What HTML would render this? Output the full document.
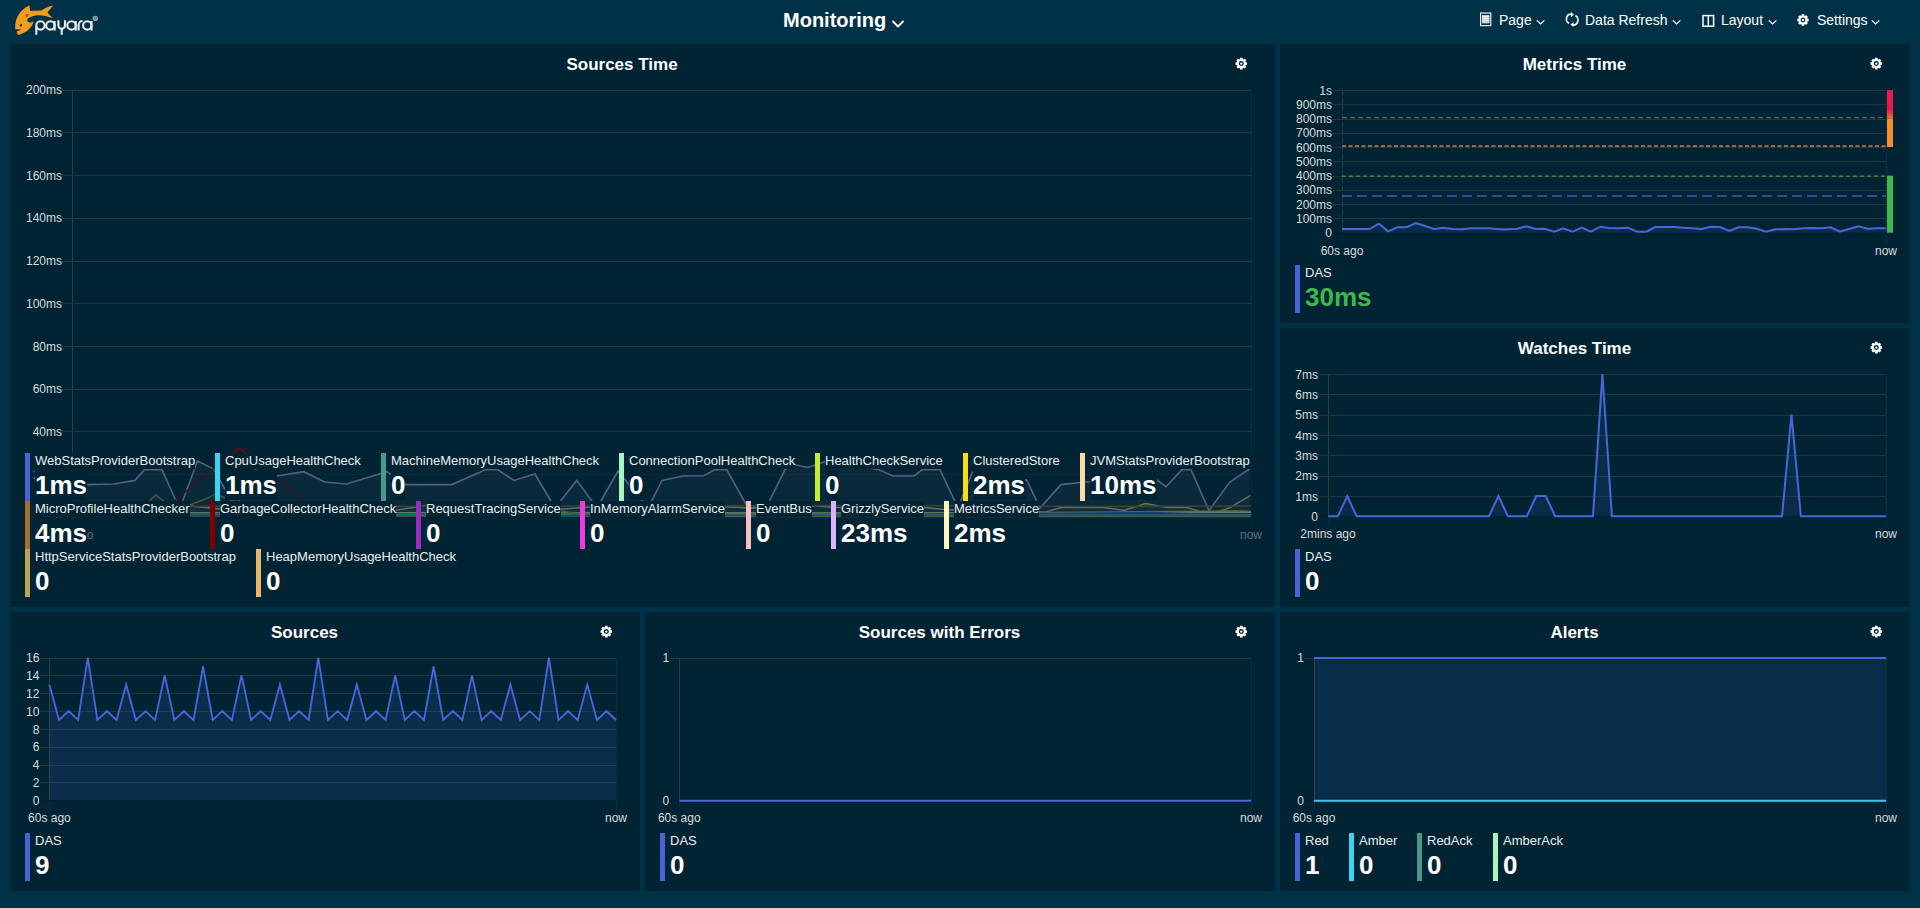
<!DOCTYPE html><html><head><meta charset="utf-8"><style>
html,body{margin:0;padding:0;width:1920px;height:908px;overflow:hidden;background:#003247;font-family:"Liberation Sans",sans-serif;}
.abs{position:absolute;display:block}
.panel{position:absolute;background:#002434}
.title{position:absolute;width:300px;text-align:center;color:#fff;font-weight:bold;font-size:17px;line-height:19px}
.lg{position:absolute;border-left:5px solid;padding-left:5px;height:48px;box-sizing:border-box;color:#fff;white-space:nowrap}
.ll{font-size:13px;line-height:15px;height:16px;color:#eee}
.ll span{display:inline-block;height:16px;background:#002434;vertical-align:top}
.lv{font-size:26px;font-weight:bold;line-height:30px;margin-top:1px}
.lv span{display:inline-block;height:30px;background:#002434;vertical-align:top}
.ax{position:absolute;font-size:12px;line-height:14px;color:#dcdcdc;white-space:nowrap}
.axr{text-align:right;width:60px}
.axc{text-align:center;width:80px}
.nav{position:absolute;top:12px;font-size:14px;line-height:16px;color:#fff;white-space:nowrap}
</style></head><body>

<div class="abs" style="left:0;top:0;width:1920px;height:44px;background:#003247"></div>
<svg class="abs" style="left:0;top:0" width="110" height="40">
<path fill="#f29b1f" d="M29.4,5.4 L30.2,11.1 C34,10.6 38,10.7 41.3,10.5 C45,8 49,6 53.2,5.4 L47.3,12.5 L52.8,18.3 C46,15.5 40,14.8 35.8,15.5 C31,16.5 28.5,17.8 27.6,18.8 C26.6,20.2 27.5,22.4 29.8,22.6 C31.5,22.7 32.8,21.8 33.6,21 C33,25 29.5,30 24.5,32.6 C21.5,34.2 19.2,34.9 18,34.9 L16.6,31.4 L21.6,29.6 L15.2,29.2 C14.9,24 15.9,19.5 17.6,16.6 C19.3,13 21.8,10.4 23.9,8.8 C25.6,7.3 27.6,6 29.4,5.4 Z"/>
<ellipse cx="21" cy="25.2" rx="0.9" ry="1.5" fill="#003247" transform="rotate(20 21 25.2)"/>
<path fill="#6b6a3a" d="M25.2,14.7 L29,13.9 L26.8,17.9 Z"/>
<g fill="none" stroke="#e9ecee" stroke-width="2.1" stroke-linecap="butt">
<path d="M36.3,34.8 V25.4 A4.2,4.2 0 1 1 40.5,29.6 A4.2,4.2 0 0 1 36.3,25.4"/>
<circle cx="50.4" cy="25.4" r="4.2"/><path d="M54.6,21 V30.6"/>
<path d="M58.4,20.3 V25.4 A3.3,3.3 0 0 0 65,25.4 V20.3 M61.7,28.7 V34.8"/>
<circle cx="71.5" cy="25.4" r="4.2"/><path d="M75.7,21 V30.6"/>
<path d="M78.6,30.6 V25 A4,4 0 0 1 82.6,21"/>
<circle cx="87.3" cy="25.4" r="4.2"/><path d="M91.5,21 V30.6"/>
</g>
<circle cx="95.3" cy="18.4" r="2.7" fill="#8ea0aa"/><path d="M94.4,20 V16.9 H95.6 A0.8,0.8 0 0 1 95.6,18.5 H94.4 M95.5,18.5 L96.3,20" fill="none" stroke="#5d7380" stroke-width="0.6"/>
</svg>
<div class="abs" style="left:783px;top:9px;font-size:20px;line-height:22px;font-weight:bold;color:#fff">Monitoring</div>
<svg class="abs" style="left:890px;top:18px" width="16" height="12"><path d="M2.5,3 L8,8.5 L13.5,3" fill="none" stroke="#fff" stroke-width="1.8"/></svg>
<svg class="abs" style="left:1480px;top:12px" width="12" height="15"><rect x="0.6" y="1" width="10.2" height="12.6" fill="#0b2f40" stroke="#e6ecef" stroke-width="1.2"/><rect x="2" y="3" width="7.4" height="8.4" fill="#c8d0d4"/><g stroke="#eef2f4" stroke-width="1"><path d="M2,4.5H9.4M2,6.6H9.4M2,8.7H9.4"/></g></svg>
<div class="nav" style="left:1499px">Page</div><svg class="abs" style="left:1535px;top:19.3px" width="10" height="8"><path d="M1.8,1.3 L5.6,5 L9.4,1.3" fill="none" stroke="#fff" stroke-width="1.1"/></svg>
<svg class="abs" style="left:1565px;top:11px" width="15" height="17"><g transform="translate(7.2,8.5) scale(0.82,0.95) translate(-7.5,-8.5)"><path d="M7,3.2 A5,5 0 0 0 3.6,12.6 M8,13.8 A5,5 0 0 0 11.4,4.4" fill="none" stroke="#fff" stroke-width="2"/><path d="M6,0.6 L9.6,3.3 L6,6 Z M9,11 L5.4,13.7 L9,16.4 Z" fill="#fff"/></g></svg>
<div class="nav" style="left:1585px">Data Refresh</div><svg class="abs" style="left:1671px;top:19.3px" width="10" height="8"><path d="M1.8,1.3 L5.6,5 L9.4,1.3" fill="none" stroke="#fff" stroke-width="1.1"/></svg>
<svg class="abs" style="left:1702px;top:14px" width="13" height="14"><rect x="1" y="1.6" width="10.6" height="10.6" fill="none" stroke="#fff" stroke-width="1.5"/><path d="M6.3,1.6V12.2" stroke="#fff" stroke-width="1.5"/></svg>
<div class="nav" style="left:1721px">Layout</div><svg class="abs" style="left:1767px;top:19.3px" width="10" height="8"><path d="M1.8,1.3 L5.6,5 L9.4,1.3" fill="none" stroke="#fff" stroke-width="1.1"/></svg>
<svg class="abs" style="left:1796px;top:13px" width="14" height="14"><polygon points="5.45,2.87 5.85,1.32 8.15,1.32 8.55,2.87 8.82,2.98 10.20,2.17 11.83,3.80 11.02,5.18 11.13,5.45 12.68,5.85 12.68,8.15 11.13,8.55 11.02,8.82 11.83,10.20 10.20,11.83 8.82,11.02 8.55,11.13 8.15,12.68 5.85,12.68 5.45,11.13 5.18,11.02 3.80,11.83 2.17,10.20 2.98,8.82 2.87,8.55 1.32,8.15 1.32,5.85 2.87,5.45 2.98,5.18 2.17,3.80 3.80,2.17 5.18,2.98" fill="#fff"/><circle cx="7" cy="7" r="2.44" fill="#003247"/><circle cx="7" cy="7" r="1.16" fill="#fff"/></svg>
<div class="nav" style="left:1817px">Settings</div><svg class="abs" style="left:1870px;top:19.3px" width="10" height="8"><path d="M1.8,1.3 L5.6,5 L9.4,1.3" fill="none" stroke="#fff" stroke-width="1.1"/></svg>
<div class="panel" style="left:10px;top:44px;width:1265px;height:563px"></div>
<div class="title" style="left:472.0px;top:55px">Sources Time</div>
<svg class="abs" style="left:1233px;top:56px" width="16" height="16"><polygon points="6.72,3.40 7.13,1.82 9.47,1.82 9.88,3.40 10.15,3.52 11.56,2.68 13.22,4.34 12.38,5.75 12.50,6.02 14.08,6.43 14.08,8.77 12.50,9.18 12.38,9.45 13.22,10.86 11.56,12.52 10.15,11.68 9.88,11.80 9.47,13.38 7.13,13.38 6.72,11.80 6.45,11.68 5.04,12.52 3.38,10.86 4.22,9.45 4.10,9.18 2.52,8.77 2.52,6.43 4.10,6.02 4.22,5.75 3.38,4.34 5.04,2.68 6.45,3.52" fill="#fff"/><circle cx="8.3" cy="7.6" r="2.48" fill="#002434"/><circle cx="8.3" cy="7.6" r="1.18" fill="#fff"/></svg>
<div class="panel" style="left:1280px;top:44px;width:630px;height:279px"></div>
<div class="title" style="left:1424.5px;top:55px">Metrics Time</div>
<svg class="abs" style="left:1868px;top:56px" width="16" height="16"><polygon points="6.72,3.40 7.13,1.82 9.47,1.82 9.88,3.40 10.15,3.52 11.56,2.68 13.22,4.34 12.38,5.75 12.50,6.02 14.08,6.43 14.08,8.77 12.50,9.18 12.38,9.45 13.22,10.86 11.56,12.52 10.15,11.68 9.88,11.80 9.47,13.38 7.13,13.38 6.72,11.80 6.45,11.68 5.04,12.52 3.38,10.86 4.22,9.45 4.10,9.18 2.52,8.77 2.52,6.43 4.10,6.02 4.22,5.75 3.38,4.34 5.04,2.68 6.45,3.52" fill="#fff"/><circle cx="8.3" cy="7.6" r="2.48" fill="#002434"/><circle cx="8.3" cy="7.6" r="1.18" fill="#fff"/></svg>
<div class="panel" style="left:1280px;top:328px;width:630px;height:279px"></div>
<div class="title" style="left:1424.5px;top:339px">Watches Time</div>
<svg class="abs" style="left:1868px;top:340px" width="16" height="16"><polygon points="6.72,3.40 7.13,1.82 9.47,1.82 9.88,3.40 10.15,3.52 11.56,2.68 13.22,4.34 12.38,5.75 12.50,6.02 14.08,6.43 14.08,8.77 12.50,9.18 12.38,9.45 13.22,10.86 11.56,12.52 10.15,11.68 9.88,11.80 9.47,13.38 7.13,13.38 6.72,11.80 6.45,11.68 5.04,12.52 3.38,10.86 4.22,9.45 4.10,9.18 2.52,8.77 2.52,6.43 4.10,6.02 4.22,5.75 3.38,4.34 5.04,2.68 6.45,3.52" fill="#fff"/><circle cx="8.3" cy="7.6" r="2.48" fill="#002434"/><circle cx="8.3" cy="7.6" r="1.18" fill="#fff"/></svg>
<div class="panel" style="left:10px;top:612px;width:630px;height:279px"></div>
<div class="title" style="left:154.5px;top:623px">Sources</div>
<svg class="abs" style="left:598px;top:624px" width="16" height="16"><polygon points="6.72,3.40 7.13,1.82 9.47,1.82 9.88,3.40 10.15,3.52 11.56,2.68 13.22,4.34 12.38,5.75 12.50,6.02 14.08,6.43 14.08,8.77 12.50,9.18 12.38,9.45 13.22,10.86 11.56,12.52 10.15,11.68 9.88,11.80 9.47,13.38 7.13,13.38 6.72,11.80 6.45,11.68 5.04,12.52 3.38,10.86 4.22,9.45 4.10,9.18 2.52,8.77 2.52,6.43 4.10,6.02 4.22,5.75 3.38,4.34 5.04,2.68 6.45,3.52" fill="#fff"/><circle cx="8.3" cy="7.6" r="2.48" fill="#002434"/><circle cx="8.3" cy="7.6" r="1.18" fill="#fff"/></svg>
<div class="panel" style="left:645px;top:612px;width:630px;height:279px"></div>
<div class="title" style="left:789.5px;top:623px">Sources with Errors</div>
<svg class="abs" style="left:1233px;top:624px" width="16" height="16"><polygon points="6.72,3.40 7.13,1.82 9.47,1.82 9.88,3.40 10.15,3.52 11.56,2.68 13.22,4.34 12.38,5.75 12.50,6.02 14.08,6.43 14.08,8.77 12.50,9.18 12.38,9.45 13.22,10.86 11.56,12.52 10.15,11.68 9.88,11.80 9.47,13.38 7.13,13.38 6.72,11.80 6.45,11.68 5.04,12.52 3.38,10.86 4.22,9.45 4.10,9.18 2.52,8.77 2.52,6.43 4.10,6.02 4.22,5.75 3.38,4.34 5.04,2.68 6.45,3.52" fill="#fff"/><circle cx="8.3" cy="7.6" r="2.48" fill="#002434"/><circle cx="8.3" cy="7.6" r="1.18" fill="#fff"/></svg>
<div class="panel" style="left:1280px;top:612px;width:630px;height:279px"></div>
<div class="title" style="left:1424.5px;top:623px">Alerts</div>
<svg class="abs" style="left:1868px;top:624px" width="16" height="16"><polygon points="6.72,3.40 7.13,1.82 9.47,1.82 9.88,3.40 10.15,3.52 11.56,2.68 13.22,4.34 12.38,5.75 12.50,6.02 14.08,6.43 14.08,8.77 12.50,9.18 12.38,9.45 13.22,10.86 11.56,12.52 10.15,11.68 9.88,11.80 9.47,13.38 7.13,13.38 6.72,11.80 6.45,11.68 5.04,12.52 3.38,10.86 4.22,9.45 4.10,9.18 2.52,8.77 2.52,6.43 4.10,6.02 4.22,5.75 3.38,4.34 5.04,2.68 6.45,3.52" fill="#fff"/><circle cx="8.3" cy="7.6" r="2.48" fill="#002434"/><circle cx="8.3" cy="7.6" r="1.18" fill="#fff"/></svg>
<div class="ax axr" style="left:2px;top:83.3px">200ms</div>
<div class="ax axr" style="left:2px;top:126.0px">180ms</div>
<div class="ax axr" style="left:2px;top:168.7px">160ms</div>
<div class="ax axr" style="left:2px;top:211.4px">140ms</div>
<div class="ax axr" style="left:2px;top:254.1px">120ms</div>
<div class="ax axr" style="left:2px;top:296.8px">100ms</div>
<div class="ax axr" style="left:2px;top:339.5px">80ms</div>
<div class="ax axr" style="left:2px;top:382.2px">60ms</div>
<div class="ax axr" style="left:2px;top:424.9px">40ms</div>
<div class="ax axr" style="left:2px;top:467.6px">20ms</div>
<div class="ax axr" style="left:2px;top:510.3px">0</div>
<div class="ax axc" style="left:32px;top:527.8px">60s ago</div>
<div class="ax axc" style="left:1211px;top:527.8px">now</div>
<div class="ax axr" style="left:1272px;top:83.5px">1s</div>
<div class="ax axr" style="left:1272px;top:97.8px">900ms</div>
<div class="ax axr" style="left:1272px;top:112.0px">800ms</div>
<div class="ax axr" style="left:1272px;top:126.3px">700ms</div>
<div class="ax axr" style="left:1272px;top:140.6px">600ms</div>
<div class="ax axr" style="left:1272px;top:154.8px">500ms</div>
<div class="ax axr" style="left:1272px;top:169.1px">400ms</div>
<div class="ax axr" style="left:1272px;top:183.4px">300ms</div>
<div class="ax axr" style="left:1272px;top:197.7px">200ms</div>
<div class="ax axr" style="left:1272px;top:211.9px">100ms</div>
<div class="ax axr" style="left:1272px;top:226.2px">0</div>
<div class="ax axc" style="left:1302px;top:243.7px">60s ago</div>
<div class="ax axc" style="left:1846px;top:243.7px">now</div>
<div class="ax axr" style="left:1258px;top:367.5px">7ms</div>
<div class="ax axr" style="left:1258px;top:387.8px">6ms</div>
<div class="ax axr" style="left:1258px;top:408.2px">5ms</div>
<div class="ax axr" style="left:1258px;top:428.5px">4ms</div>
<div class="ax axr" style="left:1258px;top:448.8px">3ms</div>
<div class="ax axr" style="left:1258px;top:469.1px">2ms</div>
<div class="ax axr" style="left:1258px;top:489.5px">1ms</div>
<div class="ax axr" style="left:1258px;top:509.8px">0</div>
<div class="ax axc" style="left:1288px;top:527.3px">2mins ago</div>
<div class="ax axc" style="left:1846px;top:527.3px">now</div>
<div class="ax axr" style="left:-20.6px;top:651.1px">16</div>
<div class="ax axr" style="left:-20.6px;top:668.9px">14</div>
<div class="ax axr" style="left:-20.6px;top:686.8px">12</div>
<div class="ax axr" style="left:-20.6px;top:704.6px">10</div>
<div class="ax axr" style="left:-20.6px;top:722.5px">8</div>
<div class="ax axr" style="left:-20.6px;top:740.3px">6</div>
<div class="ax axr" style="left:-20.6px;top:758.1px">4</div>
<div class="ax axr" style="left:-20.6px;top:776.0px">2</div>
<div class="ax axr" style="left:-20.6px;top:793.8px">0</div>
<div class="ax axc" style="left:9.399999999999999px;top:811.3px">60s ago</div>
<div class="ax axc" style="left:576px;top:811.3px">now</div>
<div class="ax axr" style="left:609.3px;top:651.1px">1</div>
<div class="ax axr" style="left:609.3px;top:793.8px">0</div>
<div class="ax axc" style="left:639.3px;top:811.3px">60s ago</div>
<div class="ax axc" style="left:1211px;top:811.3px">now</div>
<div class="ax axr" style="left:1244px;top:651.1px">1</div>
<div class="ax axr" style="left:1244px;top:793.8px">0</div>
<div class="ax axc" style="left:1274px;top:811.3px">60s ago</div>
<div class="ax axc" style="left:1846px;top:811.3px">now</div>
<svg class="abs" style="left:0;top:0" width="1920" height="908"><path d="M1251.5,89.8V526.8" stroke="#112e3a" stroke-width="1"/><path d="M72.5,516.8V526.8" stroke="#112a36" stroke-width="1"/><path d="M72.5,89.8V516.8" stroke="#2e3d44" stroke-width="1"/><path d="M62,90.5H1251" stroke="#25353d" stroke-width="1"/><path d="M62,132.5H1251" stroke="#25353d" stroke-width="1"/><path d="M62,175.5H1251" stroke="#25353d" stroke-width="1"/><path d="M62,218.5H1251" stroke="#25353d" stroke-width="1"/><path d="M62,261.5H1251" stroke="#25353d" stroke-width="1"/><path d="M62,303.5H1251" stroke="#25353d" stroke-width="1"/><path d="M62,346.5H1251" stroke="#25353d" stroke-width="1"/><path d="M62,389.5H1251" stroke="#25353d" stroke-width="1"/><path d="M62,431.5H1251" stroke="#25353d" stroke-width="1"/><path d="M62,474.5H1251" stroke="#25353d" stroke-width="1"/><path d="M62,517.5H1251" stroke="#041c28" stroke-width="1"/><path d="M1886.5,90V242.7" stroke="#112e3a" stroke-width="1"/><path d="M1342.5,232.7V242.7" stroke="#112a36" stroke-width="1"/><path d="M1342.5,90V232.7" stroke="#2e3d44" stroke-width="1" stroke-dasharray="5,3"/><path d="M1332,90.5H1886" stroke="#25353d" stroke-width="1"/><path d="M1332,104.5H1886" stroke="#25353d" stroke-width="1"/><path d="M1332,119.5H1886" stroke="#25353d" stroke-width="1"/><path d="M1332,133.5H1886" stroke="#25353d" stroke-width="1"/><path d="M1332,147.5H1886" stroke="#25353d" stroke-width="1"/><path d="M1332,161.5H1886" stroke="#25353d" stroke-width="1"/><path d="M1332,176.5H1886" stroke="#25353d" stroke-width="1"/><path d="M1332,190.5H1886" stroke="#25353d" stroke-width="1"/><path d="M1332,204.5H1886" stroke="#25353d" stroke-width="1"/><path d="M1332,218.5H1886" stroke="#25353d" stroke-width="1"/><path d="M1332,233.5H1886" stroke="#041c28" stroke-width="1"/><path d="M1886.5,374V526.3" stroke="#112e3a" stroke-width="1"/><path d="M1328.5,516.3V526.3" stroke="#112a36" stroke-width="1"/><path d="M1328.5,374V516.3" stroke="#2e3d44" stroke-width="1"/><path d="M1318,374.5H1886" stroke="#25353d" stroke-width="1"/><path d="M1318,394.5H1886" stroke="#25353d" stroke-width="1"/><path d="M1318,415.5H1886" stroke="#25353d" stroke-width="1"/><path d="M1318,435.5H1886" stroke="#25353d" stroke-width="1"/><path d="M1318,455.5H1886" stroke="#25353d" stroke-width="1"/><path d="M1318,476.5H1886" stroke="#25353d" stroke-width="1"/><path d="M1318,496.5H1886" stroke="#25353d" stroke-width="1"/><path d="M1318,516.5H1886" stroke="#041c28" stroke-width="1"/><path d="M616.5,657.6V810.3" stroke="#112e3a" stroke-width="1"/><path d="M49.5,800.3V810.3" stroke="#112a36" stroke-width="1"/><path d="M49.5,657.6V800.3" stroke="#2e3d44" stroke-width="1"/><path d="M39.4,658.5H616" stroke="#25353d" stroke-width="1"/><path d="M39.4,675.5H616" stroke="#25353d" stroke-width="1"/><path d="M39.4,693.5H616" stroke="#25353d" stroke-width="1"/><path d="M39.4,711.5H616" stroke="#25353d" stroke-width="1"/><path d="M39.4,729.5H616" stroke="#25353d" stroke-width="1"/><path d="M39.4,747.5H616" stroke="#25353d" stroke-width="1"/><path d="M39.4,765.5H616" stroke="#25353d" stroke-width="1"/><path d="M39.4,782.5H616" stroke="#25353d" stroke-width="1"/><path d="M39.4,800.5H616" stroke="#041c28" stroke-width="1"/><path d="M1251.5,657.6V810.3" stroke="#112e3a" stroke-width="1"/><path d="M679.5,800.3V810.3" stroke="#112a36" stroke-width="1"/><path d="M679.5,657.6V800.3" stroke="#2e3d44" stroke-width="1"/><path d="M669.3,658.5H1251" stroke="#25353d" stroke-width="1"/><path d="M669.3,800.5H1251" stroke="#041c28" stroke-width="1"/><path d="M1886.5,657.6V810.3" stroke="#112e3a" stroke-width="1"/><path d="M1314.5,800.3V810.3" stroke="#112a36" stroke-width="1"/><path d="M1314.5,657.6V800.3" stroke="#2e3d44" stroke-width="1"/><path d="M1304,658.5H1886" stroke="#25353d" stroke-width="1"/><path d="M1304,800.5H1886" stroke="#041c28" stroke-width="1"/><polygon points="1328.3,516.3 1328.3,516.3 1337.8,516.3 1347.2,496.0 1356.7,516.3 1366.1,516.3 1375.6,516.3 1385.0,516.3 1394.5,516.3 1403.9,516.3 1413.4,516.3 1422.8,516.3 1432.3,516.3 1441.7,516.3 1451.2,516.3 1460.6,516.3 1470.1,516.3 1479.5,516.3 1489.0,516.3 1498.4,496.0 1507.9,516.3 1517.4,516.3 1526.8,516.3 1536.3,496.0 1545.7,496.0 1555.2,516.3 1564.6,516.3 1574.1,516.3 1583.5,516.3 1593.0,516.3 1602.4,374.0 1611.9,516.3 1621.3,516.3 1630.8,516.3 1640.2,516.3 1649.7,516.3 1659.1,516.3 1668.6,516.3 1678.0,516.3 1687.5,516.3 1696.9,516.3 1706.4,516.3 1715.9,516.3 1725.3,516.3 1734.8,516.3 1744.2,516.3 1753.7,516.3 1763.1,516.3 1772.6,516.3 1782.0,516.3 1791.5,414.7 1800.9,516.3 1810.4,516.3 1819.8,516.3 1829.3,516.3 1838.7,516.3 1848.2,516.3 1857.6,516.3 1867.1,516.3 1876.5,516.3 1886.0,516.3 1886.0,516.3" fill="rgba(77,104,224,0.12)" stroke="none"/><polyline points="1328.3,516.3 1337.8,516.3 1347.2,496.0 1356.7,516.3 1366.1,516.3 1375.6,516.3 1385.0,516.3 1394.5,516.3 1403.9,516.3 1413.4,516.3 1422.8,516.3 1432.3,516.3 1441.7,516.3 1451.2,516.3 1460.6,516.3 1470.1,516.3 1479.5,516.3 1489.0,516.3 1498.4,496.0 1507.9,516.3 1517.4,516.3 1526.8,516.3 1536.3,496.0 1545.7,496.0 1555.2,516.3 1564.6,516.3 1574.1,516.3 1583.5,516.3 1593.0,516.3 1602.4,374.0 1611.9,516.3 1621.3,516.3 1630.8,516.3 1640.2,516.3 1649.7,516.3 1659.1,516.3 1668.6,516.3 1678.0,516.3 1687.5,516.3 1696.9,516.3 1706.4,516.3 1715.9,516.3 1725.3,516.3 1734.8,516.3 1744.2,516.3 1753.7,516.3 1763.1,516.3 1772.6,516.3 1782.0,516.3 1791.5,414.7 1800.9,516.3 1810.4,516.3 1819.8,516.3 1829.3,516.3 1838.7,516.3 1848.2,516.3 1857.6,516.3 1867.1,516.3 1876.5,516.3 1886.0,516.3" fill="none" stroke="#4a66dc" stroke-width="2" stroke-linejoin="miter"/><polygon points="49.4,800.3 49.4,684.4 59.0,720.0 68.6,711.1 78.2,720.0 87.8,657.6 97.4,720.0 107.0,711.1 116.6,720.0 126.2,684.4 135.8,720.0 145.5,711.1 155.1,720.0 164.7,675.4 174.3,720.0 183.9,711.1 193.5,720.0 203.1,666.5 212.7,720.0 222.3,711.1 231.9,720.0 241.5,675.4 251.1,720.0 260.7,711.1 270.3,720.0 279.9,684.4 289.5,720.0 299.1,711.1 308.7,720.0 318.3,657.6 327.9,720.0 337.6,711.1 347.2,720.0 356.8,684.4 366.4,720.0 376.0,711.1 385.6,720.0 395.2,675.4 404.8,720.0 414.4,711.1 424.0,720.0 433.6,666.5 443.2,720.0 452.8,711.1 462.4,720.0 472.0,675.4 481.6,720.0 491.2,711.1 500.8,720.0 510.4,684.4 520.0,720.0 529.7,711.1 539.3,720.0 548.9,657.6 558.5,720.0 568.1,711.1 577.7,720.0 587.3,684.4 596.9,720.0 606.5,711.1 616.1,720.0 616.1,800.3" fill="rgba(77,104,224,0.14)" stroke="none"/><polyline points="49.4,684.4 59.0,720.0 68.6,711.1 78.2,720.0 87.8,657.6 97.4,720.0 107.0,711.1 116.6,720.0 126.2,684.4 135.8,720.0 145.5,711.1 155.1,720.0 164.7,675.4 174.3,720.0 183.9,711.1 193.5,720.0 203.1,666.5 212.7,720.0 222.3,711.1 231.9,720.0 241.5,675.4 251.1,720.0 260.7,711.1 270.3,720.0 279.9,684.4 289.5,720.0 299.1,711.1 308.7,720.0 318.3,657.6 327.9,720.0 337.6,711.1 347.2,720.0 356.8,684.4 366.4,720.0 376.0,711.1 385.6,720.0 395.2,675.4 404.8,720.0 414.4,711.1 424.0,720.0 433.6,666.5 443.2,720.0 452.8,711.1 462.4,720.0 472.0,675.4 481.6,720.0 491.2,711.1 500.8,720.0 510.4,684.4 520.0,720.0 529.7,711.1 539.3,720.0 548.9,657.6 558.5,720.0 568.1,711.1 577.7,720.0 587.3,684.4 596.9,720.0 606.5,711.1 616.1,720.0" fill="none" stroke="#4a66dc" stroke-width="1.8" stroke-linejoin="miter"/><polygon points="1342.0,232.7 1342.0,229.0 1351.2,229.0 1360.4,229.0 1369.7,229.0 1378.9,223.7 1388.1,231.3 1397.3,227.3 1406.5,227.3 1415.8,223.0 1425.0,226.0 1434.2,229.0 1443.4,227.7 1452.6,229.0 1461.9,229.3 1471.1,228.3 1480.3,228.3 1489.5,228.3 1498.7,229.3 1508.0,229.3 1517.2,228.7 1526.4,226.3 1535.6,229.0 1544.8,228.7 1554.1,231.7 1563.3,228.3 1572.5,231.7 1581.7,227.7 1590.9,231.7 1600.2,226.7 1609.4,228.0 1618.6,228.3 1627.8,227.7 1637.1,231.7 1646.3,231.7 1655.5,227.0 1664.7,227.0 1673.9,227.0 1683.2,227.7 1692.4,228.3 1701.6,229.0 1710.8,226.7 1720.0,227.0 1729.3,231.0 1738.5,227.3 1747.7,227.3 1756.9,228.7 1766.1,231.7 1775.4,229.3 1784.6,229.0 1793.8,229.3 1803.0,228.3 1812.2,228.0 1821.5,228.3 1830.7,227.3 1839.9,231.7 1849.1,229.0 1858.3,226.3 1867.6,228.7 1876.8,228.3 1886.0,228.3 1886.0,232.7" fill="rgba(77,104,224,0.12)" stroke="none"/><polyline points="1342.0,229.0 1351.2,229.0 1360.4,229.0 1369.7,229.0 1378.9,223.7 1388.1,231.3 1397.3,227.3 1406.5,227.3 1415.8,223.0 1425.0,226.0 1434.2,229.0 1443.4,227.7 1452.6,229.0 1461.9,229.3 1471.1,228.3 1480.3,228.3 1489.5,228.3 1498.7,229.3 1508.0,229.3 1517.2,228.7 1526.4,226.3 1535.6,229.0 1544.8,228.7 1554.1,231.7 1563.3,228.3 1572.5,231.7 1581.7,227.7 1590.9,231.7 1600.2,226.7 1609.4,228.0 1618.6,228.3 1627.8,227.7 1637.1,231.7 1646.3,231.7 1655.5,227.0 1664.7,227.0 1673.9,227.0 1683.2,227.7 1692.4,228.3 1701.6,229.0 1710.8,226.7 1720.0,227.0 1729.3,231.0 1738.5,227.3 1747.7,227.3 1756.9,228.7 1766.1,231.7 1775.4,229.3 1784.6,229.0 1793.8,229.3 1803.0,228.3 1812.2,228.0 1821.5,228.3 1830.7,227.3 1839.9,231.7 1849.1,229.0 1858.3,226.3 1867.6,228.7 1876.8,228.3 1886.0,228.3" fill="none" stroke="#4a66dc" stroke-width="2" stroke-linejoin="miter"/><path d="M1342,117.6H1886" stroke="#e0284a" stroke-width="1.3" stroke-dasharray="5,3"/><path d="M1342,146.2H1886" stroke="#b47436" stroke-width="1.7" stroke-dasharray="4,2.5"/><path d="M1342,176.2H1886" stroke="#3a9e48" stroke-width="1.2" stroke-dasharray="4,3"/><path d="M1342,195.9H1886" stroke="#4058c0" stroke-width="1.5" stroke-dasharray="10,5"/><defs><linearGradient id="rg" x1="0" y1="0" x2="0" y2="1"><stop offset="0.7" stop-color="#e8194a"/><stop offset="1" stop-color="#f46a38"/></linearGradient></defs><rect x="1887" y="90" width="6" height="28.5" fill="url(#rg)"/><rect x="1887" y="118.5" width="6" height="28.5" fill="#f58a2e"/><rect x="1887" y="175.6" width="6" height="57.1" fill="#40b84c"/><polyline points="679.3,800.7 1251.0,800.7" fill="none" stroke="#4a66dc" stroke-width="2" stroke-linejoin="miter"/><rect x="1314" y="658" width="572" height="142.7" fill="rgba(77,104,224,0.12)"/><polyline points="1314.0,658.1 1886.0,658.1" fill="none" stroke="#4a66dc" stroke-width="2" stroke-linejoin="miter"/><polyline points="1314.0,800.7 1886.0,800.7" fill="none" stroke="#3ec8e8" stroke-width="2" stroke-linejoin="miter"/><polygon points="72.0,516.8 72.0,484.0 87.0,484.6 114.0,484.0 135.0,480.4 144.4,469.6 162.0,469.6 175.6,500.0 180.0,508.0 197.5,461.0 214.0,469.0 235.0,508.0 255.0,470.0 276.7,476.0 303.8,471.7 324.6,482.0 346.5,484.0 387.0,471.7 405.8,484.6 451.7,484.6 486.0,469.6 497.5,469.6 514.0,480.4 535.0,474.0 555.0,508.0 576.7,480.4 597.0,508.0 618.0,471.0 648.0,508.0 662.0,480.4 683.0,476.0 703.8,475.8 715.0,469.6 726.7,469.6 748.0,508.0 766.0,508.0 785.0,469.6 795.0,464.8 808.0,467.5 824.6,461.7 850.0,465.0 878.8,469.6 893.0,476.0 914.0,476.0 922.5,469.6 940.0,469.6 958.0,508.0 972.5,472.0 1000.0,478.0 1026.7,480.0 1040.0,508.0 1061.0,484.6 1085.0,482.0 1120.0,480.0 1155.8,479.0 1166.0,486.7 1182.0,469.6 1191.0,469.6 1209.0,510.6 1229.8,482.0 1249.6,469.0 1249.6,516.8" fill="rgba(220,180,248,0.10)" stroke="none"/><polyline points="72.0,484.0 87.0,484.6 114.0,484.0 135.0,480.4 144.4,469.6 162.0,469.6 175.6,500.0 180.0,508.0 197.5,461.0 214.0,469.0 235.0,508.0 255.0,470.0 276.7,476.0 303.8,471.7 324.6,482.0 346.5,484.0 387.0,471.7 405.8,484.6 451.7,484.6 486.0,469.6 497.5,469.6 514.0,480.4 535.0,474.0 555.0,508.0 576.7,480.4 597.0,508.0 618.0,471.0 648.0,508.0 662.0,480.4 683.0,476.0 703.8,475.8 715.0,469.6 726.7,469.6 748.0,508.0 766.0,508.0 785.0,469.6 795.0,464.8 808.0,467.5 824.6,461.7 850.0,465.0 878.8,469.6 893.0,476.0 914.0,476.0 922.5,469.6 940.0,469.6 958.0,508.0 972.5,472.0 1000.0,478.0 1026.7,480.0 1040.0,508.0 1061.0,484.6 1085.0,482.0 1120.0,480.0 1155.8,479.0 1166.0,486.7 1182.0,469.6 1191.0,469.6 1209.0,510.6 1229.8,482.0 1249.6,469.0" fill="none" stroke="#dcb4f8" stroke-width="1.6" stroke-linejoin="miter"/><polygon points="72.0,516.8 72.0,508.0 110.0,505.0 150.0,509.0 190.0,506.0 230.0,510.0 270.0,504.0 310.0,508.0 350.0,507.0 390.0,511.0 430.0,505.0 470.0,508.0 510.0,506.0 550.0,510.0 590.0,507.0 630.0,505.0 670.0,509.0 710.0,506.0 750.0,508.0 790.0,504.0 830.0,507.0 870.0,509.0 910.0,506.0 950.0,510.0 990.0,507.0 1044.7,512.3 1061.0,507.6 1103.0,507.6 1124.6,510.3 1145.6,503.5 1166.6,507.6 1186.9,507.6 1203.0,512.3 1216.6,512.3 1230.0,507.6 1250.5,495.4 1250.5,516.8" fill="rgba(253,216,168,0.06)" stroke="none"/><polyline points="72.0,508.0 110.0,505.0 150.0,509.0 190.0,506.0 230.0,510.0 270.0,504.0 310.0,508.0 350.0,507.0 390.0,511.0 430.0,505.0 470.0,508.0 510.0,506.0 550.0,510.0 590.0,507.0 630.0,505.0 670.0,509.0 710.0,506.0 750.0,508.0 790.0,504.0 830.0,507.0 870.0,509.0 910.0,506.0 950.0,510.0 990.0,507.0 1044.7,512.3 1061.0,507.6 1103.0,507.6 1124.6,510.3 1145.6,503.5 1166.6,507.6 1186.9,507.6 1203.0,512.3 1216.6,512.3 1230.0,507.6 1250.5,495.4" fill="none" stroke="#fdd8a8" stroke-width="1.5" stroke-linejoin="miter"/><polyline points="72.0,506.0 300.0,506.5 600.0,506.0 900.0,505.5 1000.0,506.0 1100.0,506.5 1251.0,506.0" fill="none" stroke="#a86c2c" stroke-width="1.5" stroke-linejoin="miter"/><polyline points="72.0,512.7 250.0,513.0 500.0,512.5 750.0,513.0 1000.0,512.7 1240.0,511.0 1251.0,511.5" fill="none" stroke="#f8dc14" stroke-width="1.3" stroke-linejoin="miter"/><polyline points="72.0,513.0 400.0,512.7 800.0,513.0 1251.0,512.5" fill="none" stroke="#fdf6c0" stroke-width="1.2" stroke-linejoin="miter"/><polyline points="72.0,514.5 300.0,514.0 600.0,515.0 900.0,514.5 1000.0,513.5 1100.0,513.0 1150.0,512.5 1200.0,514.0 1251.0,514.5" fill="none" stroke="#4a62d8" stroke-width="1.5" stroke-linejoin="miter"/><polyline points="72.0,515.0 400.0,514.5 800.0,515.0 1251.0,515.0" fill="none" stroke="#3ad4f0" stroke-width="1.3" stroke-linejoin="miter"/><polyline points="72.0,516.3 1251.0,516.3" fill="none" stroke="#4a9a8c" stroke-width="1.2" stroke-linejoin="miter"/><polyline points="72.0,516.8 140.0,510.0 155.8,495.0 172.0,508.0 190.0,505.0 208.0,498.0 215.0,494.0 225.0,498.0 260.0,508.0 300.0,512.0 400.0,516.0 480.0,515.0 530.0,506.0 580.0,514.0 700.0,516.5 1251.0,516.5" fill="none" stroke="#bfa050" stroke-width="1.4" stroke-linejoin="miter"/><polyline points="155.0,516.8 239.0,448.0 327.0,516.8" fill="none" stroke="#8b0000" stroke-width="1.5" stroke-linejoin="miter"/></svg>
<div class="abs" style="left:25px;top:453px;width:1240px;height:144px;background:rgba(0,36,52,0.6)"></div>
<div class="lg" style="left:25px;top:453px;border-color:#4a62d8"><div class="ll"><span>WebStatsProviderBootstrap</span></div><div class="lv" style="color:#fff"><span>1ms</span></div></div>
<div class="lg" style="left:215px;top:453px;border-color:#3ad4f0"><div class="ll"><span>CpuUsageHealthCheck</span></div><div class="lv" style="color:#fff"><span>1ms</span></div></div>
<div class="lg" style="left:381px;top:453px;border-color:#4a9a8c"><div class="ll"><span>MachineMemoryUsageHealthCheck</span></div><div class="lv" style="color:#fff"><span>0</span></div></div>
<div class="lg" style="left:619px;top:453px;border-color:#a8f5c0"><div class="ll"><span>ConnectionPoolHealthCheck</span></div><div class="lv" style="color:#fff"><span>0</span></div></div>
<div class="lg" style="left:815px;top:453px;border-color:#c4ec34"><div class="ll"><span>HealthCheckService</span></div><div class="lv" style="color:#fff"><span>0</span></div></div>
<div class="lg" style="left:963px;top:453px;border-color:#f8dc14"><div class="ll"><span>ClusteredStore</span></div><div class="lv" style="color:#fff"><span>2ms</span></div></div>
<div class="lg" style="left:1080px;top:453px;border-color:#fdd8a8"><div class="ll"><span>JVMStatsProviderBootstrap</span></div><div class="lv" style="color:#fff"><span>10ms</span></div></div>
<div class="lg" style="left:25px;top:501px;border-color:#a86c2c"><div class="ll"><span>MicroProfileHealthChecker</span></div><div class="lv" style="color:#fff"><span>4ms</span></div></div>
<div class="lg" style="left:210px;top:501px;border-color:#800000"><div class="ll"><span>GarbageCollectorHealthCheck</span></div><div class="lv" style="color:#fff"><span>0</span></div></div>
<div class="lg" style="left:416px;top:501px;border-color:#9b2cc0"><div class="ll"><span>RequestTracingService</span></div><div class="lv" style="color:#fff"><span>0</span></div></div>
<div class="lg" style="left:580px;top:501px;border-color:#f03ae0"><div class="ll"><span>InMemoryAlarmService</span></div><div class="lv" style="color:#fff"><span>0</span></div></div>
<div class="lg" style="left:746px;top:501px;border-color:#f8c0c0"><div class="ll"><span>EventBus</span></div><div class="lv" style="color:#fff"><span>0</span></div></div>
<div class="lg" style="left:831px;top:501px;border-color:#dcb4f8"><div class="ll"><span>GrizzlyService</span></div><div class="lv" style="color:#fff"><span>23ms</span></div></div>
<div class="lg" style="left:944px;top:501px;border-color:#fdf6c0"><div class="ll"><span>MetricsService</span></div><div class="lv" style="color:#fff"><span>2ms</span></div></div>
<div class="lg" style="left:25px;top:549px;border-color:#bfa050"><div class="ll"><span>HttpServiceStatsProviderBootstrap</span></div><div class="lv" style="color:#fff"><span>0</span></div></div>
<div class="lg" style="left:256px;top:549px;border-color:#e8b868"><div class="ll"><span>HeapMemoryUsageHealthCheck</span></div><div class="lv" style="color:#fff"><span>0</span></div></div>
<div class="lg" style="left:1295px;top:265px;border-color:#4a62d8"><div class="ll"><span>DAS</span></div><div class="lv" style="color:#3db94a"><span>30ms</span></div></div>
<div class="lg" style="left:1295px;top:549px;border-color:#4a62d8"><div class="ll"><span>DAS</span></div><div class="lv" style="color:#fff"><span>0</span></div></div>
<div class="lg" style="left:25px;top:833px;border-color:#4a62d8"><div class="ll"><span>DAS</span></div><div class="lv" style="color:#fff"><span>9</span></div></div>
<div class="lg" style="left:660px;top:833px;border-color:#4a62d8"><div class="ll"><span>DAS</span></div><div class="lv" style="color:#fff"><span>0</span></div></div>
<div class="lg" style="left:1295px;top:833px;border-color:#4a62d8"><div class="ll"><span>Red</span></div><div class="lv" style="color:#fff"><span>1</span></div></div>
<div class="lg" style="left:1349px;top:833px;border-color:#3ad4f0"><div class="ll"><span>Amber</span></div><div class="lv" style="color:#fff"><span>0</span></div></div>
<div class="lg" style="left:1417px;top:833px;border-color:#4a9a8c"><div class="ll"><span>RedAck</span></div><div class="lv" style="color:#fff"><span>0</span></div></div>
<div class="lg" style="left:1493px;top:833px;border-color:#a8f5c0"><div class="ll"><span>AmberAck</span></div><div class="lv" style="color:#fff"><span>0</span></div></div>
</body></html>
